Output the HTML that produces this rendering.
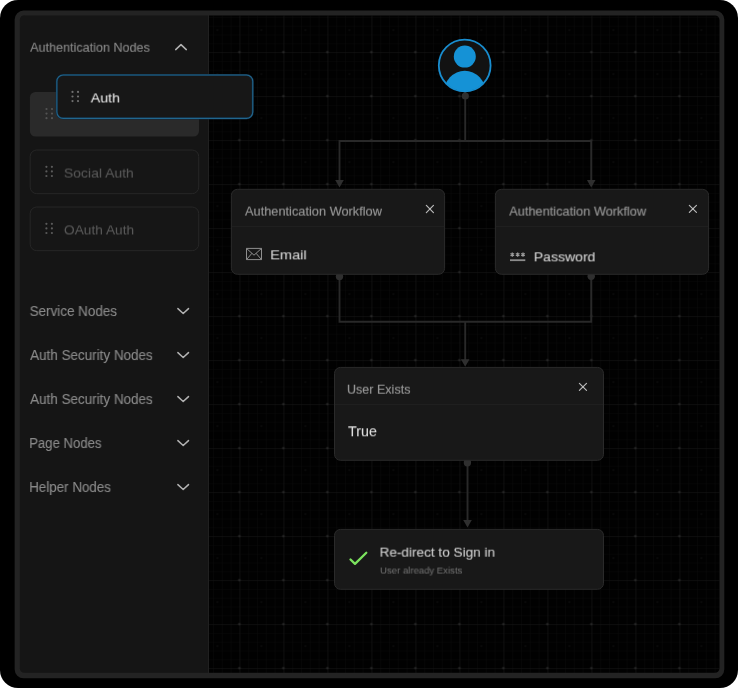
<!DOCTYPE html>
<html lang="en">
<head>
<meta charset="utf-8">
<title>Authentication flow builder</title>
<style>
html,body{margin:0;padding:0;background:#fff;}
body{width:738px;height:688px;position:relative;overflow:hidden;font-family:"Liberation Sans",sans-serif;}
.frame{position:absolute;left:0;top:0;width:738px;height:688px;background:#000;border-radius:18px;}
.canvas{position:absolute;left:19px;top:15px;width:701px;height:659px;background:#010101;border-radius:6px;overflow:hidden;}
.sidebar{position:absolute;left:19px;top:15px;width:190px;height:659px;background:#151515;border-radius:6px 0 0 6px;border-right:1px solid #202020;box-sizing:border-box;}
svg.layer{position:absolute;left:0;top:0;width:738px;height:688px;overflow:visible;}
.t{position:absolute;left:0;top:0;white-space:pre;line-height:1;transform-origin:0 0;display:block;will-change:transform;}
</style>
</head>
<body>
<div class="frame"></div>

<main>
<div class="canvas"></div>
<!-- grid + connectors -->
<svg class="layer" viewBox="0 0 738 688">
  <defs>
    <pattern id="minor" x="19.4" y="8.1" width="8.8" height="8.8" patternUnits="userSpaceOnUse">
      <path d="M0 0H8.8M0 0V8.8" stroke="#0f0f0f" stroke-width="0.65" fill="none"/>
    </pattern>
    <pattern id="major" x="19.4" y="8.1" width="44" height="44" patternUnits="userSpaceOnUse">
      <path d="M0 0H44M0 0V44" stroke="#1b1b1b" stroke-width="0.7" fill="none"/>
      <circle cx="22" cy="22" r="0.7" fill="#141414"/>
    </pattern>
    <pattern id="cross" x="-2.6" y="-13.9" width="44" height="44" patternUnits="userSpaceOnUse">
      <path d="M20.6 22H23.4M22 20.6V23.4" stroke="#282828" stroke-width="0.7" fill="none"/><circle cx="22" cy="22" r="0.6" fill="#333"/>
    </pattern>
    <clipPath id="cv"><rect x="209" y="15.4" width="510.5" height="657.6"/></clipPath>
  </defs>
  <g clip-path="url(#cv)">
    <rect x="208" y="15" width="512" height="659" fill="url(#minor)"/>
    <rect x="208" y="15" width="512" height="659" fill="url(#major)"/>
    <rect x="208" y="15" width="512" height="659" fill="url(#cross)"/>
  </g>
  <!-- connectors -->
  <g stroke="#292929" stroke-width="1.9" fill="none">
    <path d="M465.2 92V141H339.5V182"/>
    <path d="M465.2 141H591.2V182"/>
    <path d="M339.5 277V321.8H591.2V277"/>
    <path d="M465.2 321.8V361"/>
    <path d="M467.5 463V522"/>
  </g>
  <g fill="#2f2f2f">
    <path d="M335.2 180h8.6l-4.3 7.4z"/>
    <path d="M586.9 180h8.6l-4.3 7.4z"/>
    <path d="M460.9 359.3h8.6l-4.3 7.4z"/>
    <path d="M463.2 520h8.6l-4.3 7.4z"/>
    <circle cx="465.3" cy="96" r="3.6"/>
    <circle cx="339.5" cy="276.6" r="3.7"/>
    <circle cx="591.2" cy="276.3" r="3.7"/>
    <circle cx="467.4" cy="462.8" r="3.7"/>
  </g>
  <!-- avatar -->
  <defs><clipPath id="av"><circle cx="464.7" cy="65.5" r="25.6"/></clipPath></defs>
  <circle cx="464.7" cy="65.5" r="25.9" fill="#121212" stroke="#198dcf" stroke-width="1.8"/>
  <g clip-path="url(#av)" fill="#1592d6">
    <circle cx="464.8" cy="56.6" r="11"/>
    <ellipse cx="464.8" cy="93.2" rx="21" ry="22.5"/>
  </g>
</svg>

<section>
<svg class="layer" viewBox="0 0 738 688">
<rect x="231.40" y="189.30" width="213.20" height="85.00" rx="6.00" fill="#181818" stroke="#2a2a2a" stroke-width="1"/>
<rect x="231.90" y="226.10" width="212.20" height="1" fill="#212121"/>
<g stroke="#b9b9b9" stroke-width="1.2" fill="none" stroke-linecap="round">
    <path d="M426.35 205.45l7.10 7.10M433.45 205.45l-7.10 7.10"/>
</g>
  <!-- email -->
  <g stroke="#8e8e8e" stroke-width="1" fill="none" stroke-linejoin="round">
    <rect x="246.5" y="248.4" width="15" height="11.2"/>
    <path d="M246.5 248.4l7.5 6.8l7.5 -6.8M246.5 259.6l5.4 -6.3M261.5 259.6l-5.4 -6.3"/>
  </g>
</svg>
<span class="t" style="font-size:12.4px;color:#979797;font-weight:400;-webkit-text-stroke:0.12px #979797;transform:translate(245.00px,205.60px) scaleX(1.0320) rotate(0.03deg)">Authentication Workflow</span>
<span class="t" style="font-size:13.7px;color:#d2d2d2;font-weight:400;-webkit-text-stroke:0.1px #d2d2d2;transform:translate(270.20px,248.35px) scaleX(1.0667) rotate(0.03deg)">Email</span>
</section>

<section>
<svg class="layer" viewBox="0 0 738 688">
<rect x="495.40" y="189.30" width="213.20" height="85.00" rx="6.00" fill="#181818" stroke="#2a2a2a" stroke-width="1"/>
<rect x="495.90" y="226.10" width="212.20" height="1" fill="#212121"/>
<g stroke="#b9b9b9" stroke-width="1.2" fill="none" stroke-linecap="round">
    <path d="M689.35 205.35l7.10 7.10M696.45 205.35l-7.10 7.10"/>
</g>
  <!-- password -->
  <rect x="510" y="259.3" width="15.3" height="1.8" fill="#8c8c8c"/>
  <g stroke="#9c9c9c" stroke-width="1.25" fill="none" stroke-linecap="butt">
    <g id="ast"><path d="M512.3 252.5v4.2M510.5 253.55l3.6 2.1M514.1 253.55l-3.6 2.1"/></g>
    <use href="#ast" x="5.35"/>
    <use href="#ast" x="10.7"/>
  </g>
</svg>
<span class="t" style="font-size:12.4px;color:#979797;font-weight:400;-webkit-text-stroke:0.12px #979797;transform:translate(509.30px,205.60px) scaleX(1.0320) rotate(0.03deg)">Authentication Workflow</span>
<span class="t" style="font-size:13.7px;color:#d2d2d2;font-weight:400;-webkit-text-stroke:0.1px #d2d2d2;transform:translate(533.75px,250.35px) scaleX(1.0254) rotate(0.03deg)">Password</span>
</section>

<section>
<svg class="layer" viewBox="0 0 738 688">
<rect x="334.50" y="367.40" width="269.00" height="92.90" rx="6.00" fill="#181818" stroke="#2a2a2a" stroke-width="1"/>
<rect x="335.00" y="403.90" width="268.00" height="1" fill="#212121"/>
<g stroke="#b9b9b9" stroke-width="1.2" fill="none" stroke-linecap="round">
    <path d="M579.40 383.35l7.10 7.10M586.50 383.35l-7.10 7.10"/>
</g>
</svg>
<span class="t" style="font-size:12.4px;color:#979797;font-weight:400;-webkit-text-stroke:0.12px #979797;transform:translate(346.99px,383.70px) scaleX(1.0122) rotate(0.03deg)">User Exists</span>
<span class="t" style="font-size:13.8px;color:#dedede;font-weight:400;-webkit-text-stroke:0.1px #dedede;transform:translate(348.04px,425.30px) scaleX(1.0333) rotate(0.03deg)">True</span>
</section>

<section>
<svg class="layer" viewBox="0 0 738 688">
<rect x="334.50" y="529.40" width="269.00" height="59.90" rx="6.00" fill="#181818" stroke="#2a2a2a" stroke-width="1"/>
  <!-- check -->
  <path d="M350.5 559.5L355 563.9L366.3 552.7" stroke="#7be25e" stroke-width="2.3" fill="none" stroke-linecap="round" stroke-linejoin="round"/>
</svg>
<span class="t" style="font-size:13.7px;color:#cdcdcd;font-weight:400;-webkit-text-stroke:0.1px #cdcdcd;transform:translate(379.58px,545.65px) scaleX(0.9921) rotate(0.03deg)">Re-direct to Sign in</span>
<span class="t" style="font-size:9.7px;color:#727272;font-weight:400;-webkit-text-stroke:0px #727272;transform:translate(380.06px,565.55px) scaleX(0.9869) rotate(0.03deg)">User already Exists</span>
</section>
</main>

<aside>
<div class="sidebar"></div>
<svg class="layer" viewBox="0 0 738 688">
<rect x="29.9" y="92.0" width="169.1" height="44.55" rx="5.5" fill="#2a2a2a"/>
<rect x="30.20" y="150.00" width="168.50" height="43.65" rx="6.50" fill="#161616" stroke="#272727" stroke-width="1"/>
<rect x="30.20" y="207.00" width="168.50" height="43.65" rx="6.50" fill="#161616" stroke="#272727" stroke-width="1"/>
<rect x="56.85" y="75.05" width="195.9" height="43.3" rx="6.3" fill="#171717" stroke="#10283a" stroke-width="2.1"/>
<rect x="56.85" y="75.05" width="195.9" height="43.3" rx="6.3" fill="none" stroke="#21668e" stroke-width="1.05"/>
  <defs>
    <g id="grip">
      <circle cx="1" cy="1" r="1.1"/><circle cx="6.5" cy="1" r="1.1"/>
      <circle cx="1" cy="5.6" r="1.1"/><circle cx="6.5" cy="5.6" r="1.1"/>
      <circle cx="1" cy="10.2" r="1.1"/><circle cx="6.5" cy="10.2" r="1.1"/>
    </g>
  </defs>
  <use href="#grip" x="45.5" y="108.0" fill="#535353"/>
  <use href="#grip" x="45.4" y="165.8" fill="#5a5a5a"/>
  <use href="#grip" x="45.4" y="222.8" fill="#5a5a5a"/>
  <use href="#grip" x="71.5" y="90.9" fill="#707070"/>
  <!-- chevrons -->
  <g stroke="#b2b2b2" stroke-width="1.5" fill="none" stroke-linecap="round" stroke-linejoin="round">
    <path d="M175.7 49.6L181 44.6L186.3 49.6"/>
    <path d="M177.9 308.6L183.2 313.5L188.5 308.6"/>
    <path d="M177.9 352.6L183.2 357.5L188.5 352.6"/>
    <path d="M177.9 396.6L183.2 401.5L188.5 396.6"/>
    <path d="M177.9 440.6L183.2 445.5L188.5 440.6"/>
    <path d="M177.9 484.6L183.2 489.5L188.5 484.6"/>
  </g>
</svg>
<span class="t" style="font-size:13.5px;color:#878787;font-weight:400;-webkit-text-stroke:0.12px #878787;transform:translate(30.18px,40.75px) scaleX(0.9331) rotate(0.03deg)">Authentication Nodes</span>
<span class="t" style="font-size:13.3px;color:#f0f0f0;font-weight:400;-webkit-text-stroke:0px #f0f0f0;transform:translate(90.77px,91.45px) scaleX(1.0616) rotate(0.03deg)">Auth</span>
<span class="t" style="font-size:13.3px;color:#5a5a5a;font-weight:400;-webkit-text-stroke:0px #5a5a5a;transform:translate(63.89px,166.55px) scaleX(1.0503) rotate(0.03deg)">Social Auth</span>
<span class="t" style="font-size:13.3px;color:#5a5a5a;font-weight:400;-webkit-text-stroke:0px #5a5a5a;transform:translate(63.96px,223.45px) scaleX(1.0316) rotate(0.03deg)">OAuth Auth</span>
<span class="t" style="font-size:14.0px;color:#888888;font-weight:400;-webkit-text-stroke:0.12px #888888;transform:translate(29.70px,304.00px) scaleX(0.9591) rotate(0.03deg)">Service Nodes</span>
<span class="t" style="font-size:14.0px;color:#888888;font-weight:400;-webkit-text-stroke:0.12px #888888;transform:translate(30.18px,348.00px) scaleX(0.9606) rotate(0.03deg)">Auth Security Nodes</span>
<span class="t" style="font-size:14.0px;color:#888888;font-weight:400;-webkit-text-stroke:0.12px #888888;transform:translate(30.18px,392.00px) scaleX(0.9606) rotate(0.03deg)">Auth Security Nodes</span>
<span class="t" style="font-size:14.0px;color:#888888;font-weight:400;-webkit-text-stroke:0.12px #888888;transform:translate(29.24px,436.00px) scaleX(0.9380) rotate(0.03deg)">Page Nodes</span>
<span class="t" style="font-size:14.0px;color:#888888;font-weight:400;-webkit-text-stroke:0.12px #888888;transform:translate(29.23px,480.00px) scaleX(0.9548) rotate(0.03deg)">Helper Nodes</span>
</aside>

<svg class="layer" viewBox="0 0 738 688"><path d="M23.65 10.55H715.3A9 9 0 0 1 724.3 19.55V669.3A9 9 0 0 1 715.3 678.3H23.65A9 9 0 0 1 14.65 669.3V19.55A9 9 0 0 1 23.65 10.55ZM24.3 15.5H715.0A4.5 4.5 0 0 1 719.5 20.0V668.3A4.5 4.5 0 0 1 715.0 672.8H24.3A4.5 4.5 0 0 1 19.8 668.3V20.0A4.5 4.5 0 0 1 24.3 15.5Z" fill="#232323" fill-rule="evenodd"/></svg>
</body>
</html>
